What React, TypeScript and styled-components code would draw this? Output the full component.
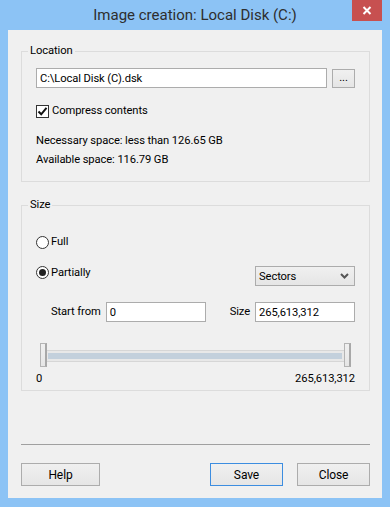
import React from "react";
import styled, { createGlobalStyle } from "styled-components";

const FONT = `Roboto, "Noto Sans", sans-serif`;

const Global = createGlobalStyle`
  html, body { margin: 0; padding: 0; }
  body { width: 390px; height: 507px; overflow: hidden; font-family: ${FONT}; }
  * { box-sizing: border-box; }
`;

const Window = styled.div`
  width: 390px;
  height: 507px;
  background: #8cc3f5;
  display: flex;
  flex-direction: column;
`;

const TitleBar = styled.div`
  position: relative;
  height: 31px;
  display: flex;
  align-items: center;
  justify-content: center;
  padding-bottom: 1px;
  font-family: ${FONT};
  font-size: 15px;
  color: #2e2e2e;
`;

const CloseButton = styled.div`
  position: absolute;
  top: 0;
  right: 8px;
  width: 30px;
  height: 21px;
  background: #c75050;
  display: flex;
  align-items: center;
  justify-content: center;
`;

const Client = styled.div`
  flex: 1;
  margin: 0 8px 9px;
  background: #f0f0f0;
  padding: 13px 12px 12px 13px;
  display: flex;
  flex-direction: column;
  font-size: 11.2px;
  letter-spacing: -0.1px;
  color: #000;
`;

const Group = styled.fieldset<{ $gap?: number }>`
  margin: ${(p) => p.$gap ?? 0}px 0 0;
  padding: 0;
  border: 1px solid #dcdcdc;
  min-width: 0;
`;

const Legend = styled.legend`
  margin-left: 6px;
  padding: 0 2px;
  line-height: 16px;
`;

const GroupBody = styled.div<{ $pb: number }>`
  padding: 0 14px ${(p) => p.$pb}px 14px;
  display: flex;
  flex-direction: column;
`;

const Row = styled.div<{ $mt?: number; $align?: string }>`
  display: flex;
  align-items: ${(p) => p.$align ?? "center"};
  margin-top: ${(p) => p.$mt ?? 0}px;
`;

const TextField = styled.div<{ $w?: number }>`
  height: 20px;
  ${(p) => (p.$w ? `width: ${p.$w}px;` : "flex: 1;")}
  background: #fff;
  border: 1px solid #acacac;
  padding: 0 3px;
  display: flex;
  align-items: center;
  white-space: nowrap;
`;

const SmallButton = styled.div`
  width: 23px;
  height: 19px;
  margin-left: 5px;
  margin-top: 1px;
  border: 1px solid #acacac;
  background: linear-gradient(#f0f0f0, #e5e5e5);
  display: flex;
  align-items: center;
  justify-content: center;
  line-height: 1;
  padding-bottom: 1px;
`;

const CheckBox = styled.div`
  width: 13px;
  height: 13px;
  border: 1px solid #333;
  background: #fff;
  margin-right: 3px;
  display: flex;
  align-items: center;
  justify-content: center;
`;

const Radio = styled.div<{ $on?: boolean }>`
  width: 13px;
  height: 13px;
  border-radius: 50%;
  border: 1px solid #333;
  background: #fff;
  margin-right: 2px;
  display: flex;
  align-items: center;
  justify-content: center;
  &::after {
    content: "";
    display: ${(p) => (p.$on ? "block" : "none")};
    width: 7px;
    height: 7px;
    border-radius: 50%;
    background: #222;
  }
`;

const Label = styled.span`
  line-height: 16px;
  white-space: nowrap;
`;

const Info = styled.div<{ $mt: number }>`
  line-height: 16px;
  margin-top: ${(p) => p.$mt}px;
`;

const Select = styled.div`
  margin-left: auto;
  margin-top: 1px;
  width: 100px;
  height: 20px;
  border: 1px solid #acacac;
  background: linear-gradient(#f0f0f0, #e5e5e5);
  display: flex;
  align-items: center;
  justify-content: space-between;
  padding: 0 5px 0 3px;
`;

const FieldLabel = styled.span<{ $ml: number }>`
  margin-left: ${(p) => p.$ml}px;
  margin-right: 5px;
  line-height: 16px;
`;

const Slider = styled.div`
  display: flex;
  align-items: flex-start;
  height: 24px;
  margin: 21px 4px 0;
`;

const Thumb = styled.div`
  width: 7px;
  height: 24px;
  border: 1px solid #b4b4b4;
  border-right: 2px solid #a8a8a8;
  background: linear-gradient(#f0f0f0, #e6e6e6);
`;

const Track = styled.div`
  flex: 1;
  height: 12px;
  margin-top: 7px;
  border-top: 1px solid #d6d6d6;
  border-bottom: 1px solid #d6d6d6;
  background: #e8e8e8;
  padding: 2px 2px 2px 1px;
`;

const TrackFill = styled.div`
  height: 6px;
  background: #c3d0dc;
`;

const Scale = styled.div`
  display: flex;
  justify-content: space-between;
  margin-top: 4px;
  line-height: 16px;
`;

const Separator = styled.div`
  height: 1px;
  background: #a0a0a0;
  margin-top: 53px;
`;

const ButtonBar = styled.div`
  display: flex;
  margin-top: 18px;
  gap: 14px;
`;

const DialogButton = styled.div<{ $w: number; $focus?: boolean; $first?: boolean }>`
  width: ${(p) => p.$w}px;
  height: 23px;
  ${(p) => (p.$first ? "margin-right: auto;" : "")}
  border: 1px solid ${(p) => (p.$focus ? "#3c8de0" : "#acacac")};
  background: linear-gradient(#f0f0f0, #e5e5e5);
  display: flex;
  align-items: center;
  justify-content: center;
  font-size: 12px;
`;

export default function App() {
  return (
    <>
      <Global />
      <Window>
        <TitleBar>
          Image creation: Local Disk (C:)
          <CloseButton>
            <svg width="10" height="9" viewBox="0 0 10 9">
              <path d="M1.5 1 L8.5 8 M8.5 1 L1.5 8" stroke="#fff" strokeWidth="2" />
            </svg>
          </CloseButton>
        </TitleBar>
        <Client>
          <Group>
            <Legend>Location</Legend>
            <GroupBody $pb={13}>
              <Row $mt={9} $align="flex-start">
                <TextField>C:\Local Disk (C).dsk</TextField>
                <SmallButton>...</SmallButton>
              </Row>
              <Row $mt={15}>
                <CheckBox>
                  <svg width="11" height="11" viewBox="0 0 11 11">
                    <path d="M1.5 5.5 L4.2 8.3 L9.5 1.8" stroke="#111" strokeWidth="2" fill="none" />
                  </svg>
                </CheckBox>
                <Label>Compress contents</Label>
              </Row>
              <Info $mt={14}>Necessary space: less than 126.65 GB</Info>
              <Info $mt={3}>Available space: 116.79 GB</Info>
            </GroupBody>
          </Group>
          <Group $gap={15}>
            <Legend>Size</Legend>
            <GroupBody $pb={3}>
              <Row $mt={21}>
                <Radio />
                <Label>Full</Label>
              </Row>
              <Row $mt={15} $align="flex-start">
                <Radio $on style={{ marginTop: 1 }} />
                <Label>Partially</Label>
                <Select>
                  <span>Sectors</span>
                  <svg width="9" height="6" viewBox="0 0 9 6">
                    <path d="M1 1 L4.5 4.5 L8 1" stroke="#555" strokeWidth="2" fill="none" />
                  </svg>
                </Select>
              </Row>
              <Row $mt={16}>
                <FieldLabel $ml={15}>Start from</FieldLabel>
                <TextField $w={100}>0</TextField>
                <FieldLabel $ml={23} style={{ marginLeft: "auto" }}>Size</FieldLabel>
                <TextField $w={100}>265,613,312</TextField>
              </Row>
              <Slider>
                <Thumb />
                <Track>
                  <TrackFill />
                </Track>
                <Thumb />
              </Slider>
              <Scale>
                <span>0</span>
                <span>265,613,312</span>
              </Scale>
            </GroupBody>
          </Group>
          <Separator />
          <ButtonBar>
            <DialogButton $w={79} $first>Help</DialogButton>
            <DialogButton $w={73} $focus>Save</DialogButton>
            <DialogButton $w={73}>Close</DialogButton>
          </ButtonBar>
        </Client>
      </Window>
    </>
  );
}
